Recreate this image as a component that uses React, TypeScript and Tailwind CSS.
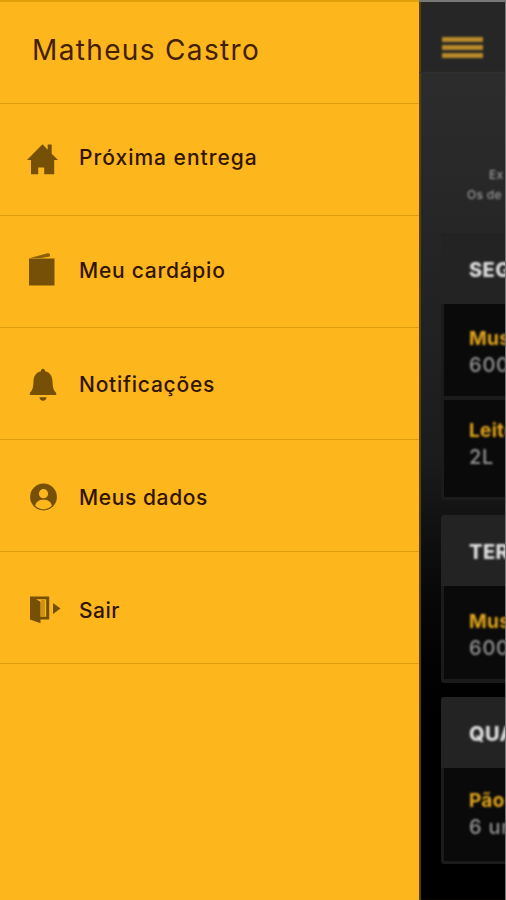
import type { ReactNode } from "react";

type MenuEntry = {
  label: string;
  icon: ReactNode;
  iconClassName: string;
  className: string;
};

type DeliveryItem = {
  name: string;
  amount: string;
  className: string;
};

type DeliveryDay = {
  day: string;
  className: string;
  items: DeliveryItem[];
};

function HomeIcon() {
  return (
    <svg width="32" height="34" viewBox="0 0 32 34" fill="currentColor">
      <path d="M15.5 1.2 0 17h4v14.2h7.2v-6.7h6v6.7h10V17H31l-6.3-6.2V1.6h-4v5.2z" />
    </svg>
  );
}

function MenuCardIcon() {
  return (
    <svg width="32" height="34" viewBox="0 0 32 34" fill="currentColor">
      <path d="M2 5.500h25.500V32.500H2z" />
      <path d="M3 4.900 20.500.3q2.500-.5 2.500 1.500V3.500L14 4.900z" opacity=".85" />
    </svg>
  );
}

function BellIcon() {
  return (
    <svg width="32" height="34" viewBox="0 0 32 34" fill="currentColor">
      <path d="M16 .8c-1.3 0-2.200 1-2 2.500C9 4.500 6.800 8 6.500 13c-.3 6-.7 9-3.700 12v2h26.400v-2c-3-3-3.400-6-3.700-12-.3-5-2.500-8.500-7.500-9.700.2-1.500-.7-2.500-2-2.500z" />
      <path d="M12.500 29.300h7c0 2.200-1.500 3.500-3.500 3.500s-3.500-1.300-3.500-3.500z" />
    </svg>
  );
}

function UserIcon() {
  return (
    <svg width="32" height="34" viewBox="0 0 32 34">
      <circle cx="16.500" cy="17" r="13.400" fill="currentColor" />
      <circle cx="16.500" cy="13.700" r="4.600" fill="#fdb71c" />
      <path d="M8.300 25.800c.5-4.300 4-6 8.200-6s7.700 1.700 8.200 6c-2 2.300-5 3.500-8.200 3.500s-6.200-1.200-8.200-3.500z" fill="#fdb71c" />
    </svg>
  );
}

function ExitIcon() {
  return (
    <svg width="36" height="34" viewBox="0 0 36 34" fill="currentColor">
      <path d="M3 3.500h19.200V26.500H13.500v-2.700h5.700V6.200H9l4.500 2.500v21.500L3 26.500z" />
      <path d="M14 7h4v16.500h-4z" opacity=".35" />
      <path d="m26 10 7.500 5.500-7.500 5.500z" />
    </svg>
  );
}

const entries: MenuEntry[] = [
  { label: "Próxima entrega", icon: <HomeIcon />, iconClassName: "pt-px", className: "pb-[4px] tracking-[1px]" },
  { label: "Meu cardápio", icon: <MenuCardIcon />, iconClassName: "pb-[4px]", className: "pb-[2px] tracking-[0.75px]" },
  { label: "Notificações", icon: <BellIcon />, iconClassName: "pt-[3px]", className: "pt-[2px] tracking-[0.75px]" },
  { label: "Meus dados", icon: <UserIcon />, iconClassName: "pt-[2px]", className: "pt-[4px] tracking-[0.6px]" },
  { label: "Sair", icon: <ExitIcon />, iconClassName: "pt-[5px]", className: "pt-[6px] tracking-[0.5px]" },
];

const days: DeliveryDay[] = [
  {
    day: "SEGUNDA",
    className: "h-[267px]",
    items: [
      { name: "Mussarela", amount: "600g", className: "h-[92px] pt-[22px]" },
      { name: "Leite", amount: "2L", className: "mt-[4px] h-[97px] pt-[18px]" },
    ],
  },
  {
    day: "TERÇA",
    className: "mt-[15px] h-[168px]",
    items: [{ name: "Mussarela", amount: "600g", className: "h-[93px] pt-[23px]" }],
  },
  {
    day: "QUARTA",
    className: "mt-[14px] h-[167px]",
    items: [{ name: "Pão", amount: "6 unidades", className: "h-[93px] pt-[20px]" }],
  },
];

function DayCard({ day, className, items }: DeliveryDay) {
  return (
    <section className={`w-[300px] shrink-0 rounded-[3px] bg-[#1b1b1b] pl-[3px] ${className}`}>
      <h2 className="-ml-[3px] flex h-[71px] items-center rounded-t-[3px] bg-[#232323] pl-[28px] pt-[2px] text-[20px] font-extrabold tracking-[0.4px] text-[#dedede]">
        <span className="blur-[0.8px]">{day}</span>
      </h2>
      {items.map((item) => (
        <div key={item.name} className={`bg-[#0a0a0a] pl-[25px] leading-[26px] ${item.className}`}>
          <p className="text-[19px] font-bold tracking-[0.3px] text-[#e3a61c] blur-[0.8px]">{item.name}</p>
          <p className="text-[20px] font-medium tracking-[0.8px] text-[#969696] blur-[0.8px]">{item.amount}</p>
        </div>
      ))}
    </section>
  );
}

export default function App() {
  return (
    <div className="flex h-[900px] w-[506px] overflow-hidden bg-black font-['Inter',sans-serif]">
      <aside className="flex w-[419px] shrink-0 flex-col border-t-2 border-[#e29f08] bg-[#fdb71c]">
        <header className="h-[102px] border-b border-[#df9c0f] pl-[32px] pt-[27px]">
          <h1 className="text-[28px] font-normal leading-[42px] tracking-[1.350px] text-[#432003]">Matheus Castro</h1>
        </header>
        <nav>
          {entries.map((entry) => (
            <a key={entry.label} className="flex h-[112px] items-center border-b border-[#df9c0f] pl-[27px]">
              <span className={`flex w-[52px] shrink-0 text-[#755006] ${entry.iconClassName}`}>{entry.icon}</span>
              <span className={`text-[21px] font-medium text-[#301400] ${entry.className}`}>{entry.label}</span>
            </a>
          ))}
        </nav>
      </aside>

      <main className="flex w-[87px] shrink-0 flex-col overflow-hidden whitespace-nowrap border-r border-t-2 border-r-[#777777] border-t-[#777777] bg-linear-to-b from-[#303030] via-[#1b1c1b] via-50% to-black to-90% shadow-[inset_2px_0_1px_#59420d]">
        <div className="flex h-[71px] shrink-0 flex-col gap-[3px] border-b border-[#303030] bg-[#262626] pl-[23px] pt-[35px] shadow-[inset_2px_0_1px_#59420d]">
          <span className="h-[5px] w-[41px] shrink-0 bg-[#b88a2a] blur-[0.8px]" />
          <span className="h-[5px] w-[41px] shrink-0 bg-[#b88a2a] blur-[0.8px]" />
          <span className="h-[5px] w-[41px] shrink-0 bg-[#b88a2a] blur-[0.8px]" />
        </div>
        <div className="h-[160px] shrink-0 pt-[92px] text-[12px] font-medium leading-[20px] tracking-[0.3px] text-[#999999]">
          <p className="pl-[70px] blur-[0.8px]">Ex</p>
          <p className="pl-[48px] blur-[0.8px]">Os de</p>
        </div>
        <div className="flex flex-col pl-[22px]">
          {days.map((day) => (
            <DayCard key={day.day} {...day} />
          ))}
        </div>
      </main>
    </div>
  );
}
